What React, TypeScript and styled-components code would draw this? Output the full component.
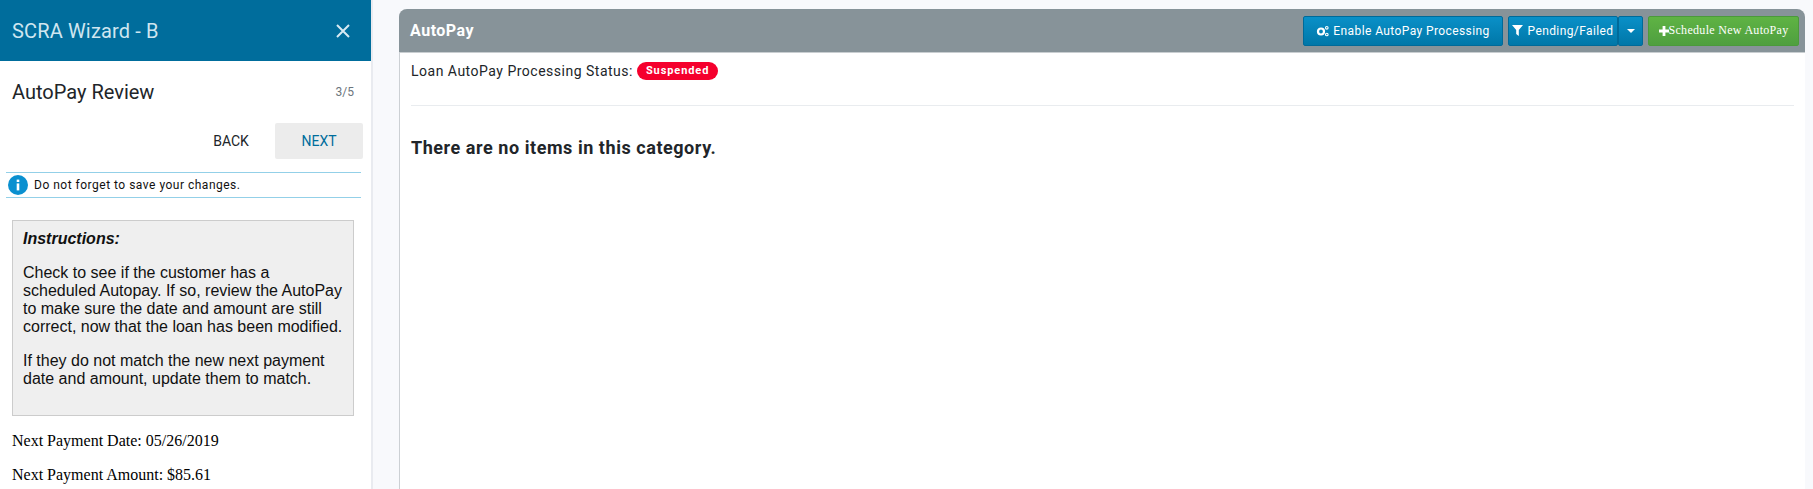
import React from "react";
import styled, { createGlobalStyle } from "styled-components";

const Global = createGlobalStyle`
  html, body { margin: 0; padding: 0; height: 489px; overflow: hidden; background: #f8f9fc; }
  * { box-sizing: border-box; }
`;

const Page = styled.div`
  display: flex;
  width: 1813px;
  height: 489px;
  overflow: hidden;
  font-family: Roboto, sans-serif;
`;

const Sidebar = styled.aside`
  flex: 0 0 373px;
  height: 489px;
  background: #fff;
  border-right: 2px solid #e9ebf0;
  overflow: hidden;
`;

const WizardHeader = styled.header`
  height: 61px;
  background: #006d9c;
  color: #cfe6f0;
  display: flex;
  align-items: center;
  justify-content: space-between;
  padding: 0 20px 0 12px;
  font-size: 20px;
  letter-spacing: 0.15px;
`;

const CloseButton = styled.svg`
  width: 16px;
  height: 16px;
  display: block;
`;

const TitleRow = styled.div`
  display: flex;
  justify-content: space-between;
  align-items: center;
  height: 62px;
  padding: 0 17px 0 12px;
  color: #212529;
`;

const StepTitle = styled.h2`
  margin: 0;
  font-size: 20px;
  font-weight: 400;
`;

const StepCount = styled.span`
  font-size: 12px;
  color: #6c757d;
`;

const NavRow = styled.div`
  display: flex;
  justify-content: flex-end;
  padding-right: 8px;
`;

const NavButton = styled.button<{ $primary?: boolean }>`
  width: 88px;
  height: 36px;
  border: 0;
  border-radius: 2px;
  font-family: Roboto, sans-serif;
  font-size: 14px;
  background: ${(p) => (p.$primary ? "#ececec" : "transparent")};
  color: ${(p) => (p.$primary ? "#006d9c" : "#212529")};
`;

const Notice = styled.div`
  display: flex;
  align-items: center;
  gap: 6px;
  height: 26px;
  margin: 13px 10px 0 6px;
  padding-left: 2px;
  border-top: 1px solid #93d0e8;
  border-bottom: 1px solid #93d0e8;
  font-size: 12px;
  letter-spacing: 0.5px;
  color: #111;
`;

const InfoIcon = styled.svg`
  width: 20px;
  height: 20px;
  flex: none;
`;

const Instructions = styled.section`
  margin: 22px 17px 0 12px;
  height: 196px;
  padding: 9px 10px;
  background: #efefef;
  border: 1px solid #ccc;
  font-family: "Liberation Sans", Arial, sans-serif;
  font-size: 16px;
  line-height: 18px;
  color: #111;
`;

const InstructionsTitle = styled.div`
  font-weight: 700;
  font-style: italic;
  margin-bottom: 16px;
`;

const Paragraph = styled.p`
  margin: 0 0 16px;
`;

const Fact = styled.p`
  margin: 16px 12px 0;
  font-family: "Liberation Serif", "Times New Roman", serif;
  font-size: 16px;
  line-height: 18px;
  color: #000;
`;

const Main = styled.main`
  flex: 1;
  padding: 9px 8px 0 26px;
`;

const Panel = styled.div`
  height: 480px;
  background: #fff;
  border-left: 1px solid #ccd0d4;
  border-radius: 8px 8px 0 0;
`;

const PanelHeader = styled.div`
  height: 44px;
  margin-left: -1px;
  padding: 0 6px 0 11px;
  background: #879399;
  border-bottom: 1px solid #c9ced1;
  border-radius: 8px 8px 0 0;
  display: flex;
  align-items: center;
  justify-content: space-between;
`;

const PanelTitle = styled.h1`
  margin: 0;
  font-size: 16px;
  font-weight: 700;
  letter-spacing: 0.5px;
  color: #fff;
`;

const Actions = styled.div`
  display: flex;
  gap: 5px;
`;

const ActionButton = styled.button<{ $green?: boolean; $serif?: boolean; $w: number }>`
  height: 30px;
  width: ${(p) => p.$w}px;
  padding: 0;
  display: flex;
  align-items: center;
  justify-content: center;
  gap: 4px;
  border: 1px solid ${(p) => (p.$green ? "#4b9a3b" : "#006a99")};
  border-radius: 2px;
  background: ${(p) =>
    p.$green ? "linear-gradient(#5fb344, #4f9f3f)" : "linear-gradient(#0a90c8, #0077a8)"};
  color: #fff;
  font-family: ${(p) => (p.$serif ? '"Liberation Serif", serif' : "Roboto, sans-serif")};
  font-size: 12px;
  letter-spacing: ${(p) => (p.$serif ? "0.3px" : "0.4px")};
`;

const SplitGroup = styled.div`
  display: flex;
`;

const Body = styled.div`
  padding: 0 11px;
  color: #212529;
`;

const StatusLine = styled.div`
  display: flex;
  align-items: center;
  gap: 4px;
  height: 38px;
  padding-bottom: 2px;
  font-size: 14px;
  letter-spacing: 0.5px;
  border: 0;
`;

const Badge = styled.span`
  display: inline-block;
  height: 18px;
  line-height: 18px;
  padding: 0 9px;
  border-radius: 9px;
  background: #f5002d;
  color: #fff;
  font-size: 11px;
  font-weight: 700;
  letter-spacing: 0.9px;
`;

const Divider = styled.hr`
  margin: 14px 0 0;
  border: 0;
  border-top: 1px solid #e9ecef;
`;

const Empty = styled.h3`
  margin: 31px 0 0;
  font-size: 18px;
  font-weight: 700;
  letter-spacing: 0.55px;
  line-height: 22px;
`;

const Glyph = styled.svg`
  display: block;
  flex: none;
`;

export default function App() {
  return (
    <Page>
      <Global />
      <Sidebar>
        <WizardHeader>
          <span>SCRA Wizard - B</span>
          <CloseButton viewBox="0 0 16 16">
            <path d="M2 2 L14 14 M14 2 L2 14" stroke="#d7eaf3" strokeWidth="2" fill="none" />
          </CloseButton>
        </WizardHeader>
        <TitleRow>
          <StepTitle>AutoPay Review</StepTitle>
          <StepCount>3/5</StepCount>
        </TitleRow>
        <NavRow>
          <NavButton>BACK</NavButton>
          <NavButton $primary>NEXT</NavButton>
        </NavRow>
        <Notice>
          <InfoIcon viewBox="0 0 20 20">
            <circle cx="10" cy="10" r="10" fill="#0a90d0" />
            <rect x="8.7" y="8.4" width="2.6" height="7" fill="#fff" />
            <rect x="8.7" y="4.6" width="2.6" height="2.4" fill="#fff" />
          </InfoIcon>
          Do not forget to save your changes.
        </Notice>
        <Instructions>
          <InstructionsTitle>Instructions:</InstructionsTitle>
          <Paragraph>
            Check to see if the customer has a scheduled Autopay. If so, review the AutoPay to make
            sure the date and amount are still correct, now that the loan has been modified.
          </Paragraph>
          <Paragraph>
            If they do not match the new next payment date and amount, update them to match.
          </Paragraph>
        </Instructions>
        <Fact>Next Payment Date: 05/26/2019</Fact>
        <Fact>Next Payment Amount: $85.61</Fact>
      </Sidebar>
      <Main>
        <Panel>
          <PanelHeader>
            <PanelTitle>AutoPay</PanelTitle>
            <Actions>
              <ActionButton $w={200}>
                <Glyph width="13" height="12" viewBox="0 0 13 12">
                  <circle cx="5" cy="6.5" r="3" fill="none" stroke="#fff" strokeWidth="2.2" />
                  <circle cx="10.8" cy="2.8" r="1.3" fill="none" stroke="#fff" strokeWidth="1.1" />
                  <circle cx="10.8" cy="9.5" r="1.3" fill="none" stroke="#fff" strokeWidth="1.1" />
                </Glyph>
                Enable AutoPay Processing
              </ActionButton>
              <SplitGroup>
                <ActionButton $w={110}>
                  <Glyph width="11" height="11" viewBox="0 0 11 11">
                    <path d="M0 0 H11 L6.8 5 V11 L4.2 9 V5 Z" fill="#fff" />
                  </Glyph>
                  Pending/Failed
                </ActionButton>
                <ActionButton $w={25}>
                  <Glyph width="8" height="4" viewBox="0 0 8 4">
                    <path d="M0 0 H8 L4 4 Z" fill="#fff" />
                  </Glyph>
                </ActionButton>
              </SplitGroup>
              <ActionButton $w={151} $green $serif>
                <Glyph width="10" height="10" viewBox="0 0 10 10" style={{ marginRight: -4 }}>
                  <path d="M3.6 0 H6.4 V3.6 H10 V6.4 H6.4 V10 H3.6 V6.4 H0 V3.6 H3.6 Z" fill="#fff" />
                </Glyph>
                Schedule New AutoPay
              </ActionButton>
            </Actions>
          </PanelHeader>
          <Body>
            <StatusLine>
              Loan AutoPay Processing Status: <Badge>Suspended</Badge>
            </StatusLine>
            <Divider />
            <Empty>There are no items in this category.</Empty>
          </Body>
        </Panel>
      </Main>
    </Page>
  );
}
